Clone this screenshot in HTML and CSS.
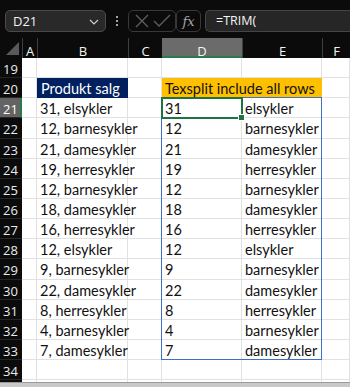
FILE: index.html
```html
<!DOCTYPE html>
<html lang="no">
<head>
<meta charset="utf-8">
<title>Excel</title>
<link rel="stylesheet" href="styles.css">
</head>
<body>
<div class="app">
  <div class="toolbar">
    <div class="namebox">
      <span class="nb-text">D21</span>
      <svg class="chev" width="10" height="6" viewBox="0 0 10 6"><path d="M1 1 L5 5 L9 1" fill="none" stroke="#d0d0d0" stroke-width="1.2"/></svg>
    </div>
    <div class="dots"><span></span><span></span><span></span></div>
    <div class="cmdbox">
      <svg width="16" height="14" viewBox="0 0 16 14"><path d="M2 1 L14 13 M14 1 L2 13" stroke="#5e5e5e" stroke-width="1.3" fill="none"/></svg>
      <svg width="18" height="14" viewBox="0 0 18 14"><path d="M1 7 L6 12 L17 1" stroke="#5e5e5e" stroke-width="1.3" fill="none"/></svg>
    </div>
    <div class="fxbox"><span class="fx">fx</span></div>
    <div class="formula">=TRIM(</div>
  </div>

  <div class="sheet">
    <div class="corner"><span class="tri"></span></div>
    <div class="ch">A</div><div class="ch">B</div><div class="ch">C</div><div class="ch ch-sel">D</div><div class="ch">E</div><div class="ch">F</div>

    <div class="rh">19</div><div class="c"></div><div class="c"></div><div class="c"></div><div class="c"></div><div class="c"></div><div class="c"></div>
    <div class="rh">20</div><div class="c"></div><div class="c navy">Produkt salg</div><div class="c"></div><div class="c gold span2">Texsplit include all rows</div><div class="c"></div>
    <div class="rh rh-sel">21</div><div class="c"></div><div class="c">31, elsykler</div><div class="c"></div><div class="c">31</div><div class="c">elsykler</div><div class="c"></div>
    <div class="rh">22</div><div class="c"></div><div class="c">12, barnesykler</div><div class="c"></div><div class="c">12</div><div class="c">barnesykler</div><div class="c"></div>
    <div class="rh">23</div><div class="c"></div><div class="c">21, damesykler</div><div class="c"></div><div class="c">21</div><div class="c">damesykler</div><div class="c"></div>
    <div class="rh">24</div><div class="c"></div><div class="c">19, herresykler</div><div class="c"></div><div class="c">19</div><div class="c">herresykler</div><div class="c"></div>
    <div class="rh">25</div><div class="c"></div><div class="c">12, barnesykler</div><div class="c"></div><div class="c">12</div><div class="c">barnesykler</div><div class="c"></div>
    <div class="rh">26</div><div class="c"></div><div class="c">18, damesykler</div><div class="c"></div><div class="c">18</div><div class="c">damesykler</div><div class="c"></div>
    <div class="rh">27</div><div class="c"></div><div class="c">16, herresykler</div><div class="c"></div><div class="c">16</div><div class="c">herresykler</div><div class="c"></div>
    <div class="rh">28</div><div class="c"></div><div class="c">12, elsykler</div><div class="c"></div><div class="c">12</div><div class="c">elsykler</div><div class="c"></div>
    <div class="rh">29</div><div class="c"></div><div class="c">9, barnesykler</div><div class="c"></div><div class="c">9</div><div class="c">barnesykler</div><div class="c"></div>
    <div class="rh">30</div><div class="c"></div><div class="c">22, damesykler</div><div class="c"></div><div class="c">22</div><div class="c">damesykler</div><div class="c"></div>
    <div class="rh">31</div><div class="c"></div><div class="c">8, herresykler</div><div class="c"></div><div class="c">8</div><div class="c">herresykler</div><div class="c"></div>
    <div class="rh">32</div><div class="c"></div><div class="c">4, barnesykler</div><div class="c"></div><div class="c">4</div><div class="c">barnesykler</div><div class="c"></div>
    <div class="rh">33</div><div class="c"></div><div class="c">7, damesykler</div><div class="c"></div><div class="c">7</div><div class="c">damesykler</div><div class="c"></div>
    <div class="rh">34</div><div class="c"></div><div class="c"></div><div class="c"></div><div class="c"></div><div class="c"></div><div class="c"></div>
    <div class="rh"></div><div class="c"></div><div class="c"></div><div class="c"></div><div class="c"></div><div class="c"></div><div class="c"></div>

    <div class="spill"></div>
    <div class="selection"><span class="handle"></span></div>
  </div>
  <div class="bottomband"></div>
</div>
</body>
</html>
```

FILE: styles.css
```css
* { box-sizing: border-box; }
html, body { margin: 0; padding: 0; }
body { background: #0b0b0b; width: 350px; height: 387px; overflow: hidden; }
.app { width: 350px; height: 387px; display: flex; flex-direction: column; }

.toolbar {
  height: 38px;
  flex: none;
  background: #0b0b0b;
  display: flex;
  align-items: flex-start;
  padding-top: 10px;
  font-family: "Open Sans", "Noto Sans", sans-serif;
}
.namebox {
  margin-left: 5px;
  width: 101px;
  height: 22px;
  background: #292929;
  border: 1px solid #4a4a4a;
  border-radius: 5px;
  display: flex;
  align-items: center;
  justify-content: space-between;
  padding: 0 6px 0 7px;
  color: #f2f2f2;
  font-size: 13px;
}
.chev { margin-top: 1px; }
.dots {
  width: 22px;
  height: 22px;
  display: flex;
  flex-direction: column;
  align-items: center;
  justify-content: center;
  gap: 2px;
}
.dots span { width: 2px; height: 2px; background: #d8d8d8; border-radius: 1px; }
.cmdbox {
  width: 48px;
  height: 22px;
  border: 1px solid #383838;
  border-radius: 5px;
  display: flex;
  align-items: center;
  justify-content: space-around;
  padding: 0 3px;
}
.fxbox {
  width: 25px;
  height: 22px;
  border: 1px solid #383838;
  border-radius: 5px;
  display: flex;
  align-items: center;
  justify-content: center;
}
.fx {
  font-family: "DejaVu Serif", "Liberation Serif", serif;
  font-style: italic;
  font-size: 13px;
  color: #a6a6a6;
  line-height: 1;
}
.formula {
  margin-left: 4px;
  flex: 1;
  height: 22px;
  background: #262626;
  border: 1px solid #454545;
  border-right: none;
  border-radius: 5px 0 0 5px;
  color: #f4f4f4;
  font-size: 12.5px;
  line-height: 20px;
  padding-left: 10px;
}

.sheet {
  position: relative;
  flex: none;
  height: 344px;
  overflow: hidden;
  display: grid;
  grid-template-columns: 22px 15px 91px 34px 80px 80px 28px;
  grid-template-rows: 20px repeat(17, 20.15px);
  background: #fff;
  font-family: Lato, "Liberation Sans", sans-serif;
}
.corner {
  background: #0b0b0b;
  position: relative;
}
.tri {
  position: absolute;
  right: 3px;
  bottom: 3px;
  width: 0;
  height: 0;
  border-left: 13px solid transparent;
  border-bottom: 13px solid #595959;
}
.ch {
  background: #0b0b0b;
  color: #f4f4f4;
  font-family: "Open Sans", "Noto Sans", sans-serif;
  font-size: 13px;
  text-align: center;
  line-height: 20px;
  border-left: 1px solid #3e3e3e;
  padding-top: 3px;
}
.ch-sel {
  background: #6b6b6b;
  border-bottom: 2px solid #2a7a4a;
  border-left: none;
}
.rh {
  background: #0b0b0b;
  color: #ececec;
  font-family: "Open Sans", "Noto Sans", sans-serif;
  font-size: 13px;
  line-height: 22px;
  padding-left: 3px;
  border-bottom: 1px solid #262626;
}
.rh-sel {
  background: #636363;
  border-right: 2px solid #2a7a4a;
  color: #ffffff;
}
.c {
  border-right: 1px solid #e1e1e1;
  border-bottom: 1px solid #e1e1e1;
  color: #111;
  font-size: 14.5px;
  line-height: 22px;
  padding-left: 3px;
  white-space: nowrap;
}
.navy {
  background: #002060;
  border-color: #002060;
  color: #fff;
  padding-left: 4px;
}
.gold {
  background: #ffc000;
  border-color: #ffc000;
}
.span2 { grid-column: span 2; }

.spill {
  position: absolute;
  grid-column: 5 / 7;
  grid-row: 4 / 17;
  top: -1px;
  left: -1px;
  right: 0;
  bottom: 0;
  border: 1px solid #3e70c8;
  pointer-events: none;
}
.selection {
  position: absolute;
  grid-column: 5 / 6;
  grid-row: 4 / 5;
  top: -1px;
  left: -1px;
  right: -1px;
  bottom: -1px;
  border: 2px solid #1f7244;
}
.handle {
  position: absolute;
  right: -4px;
  bottom: -4px;
  width: 7px;
  height: 7px;
  background: #1f7244;
  border: 1px solid #fff;
}
.bottomband { flex: 1; background: #c9c9c9; border-top: 1px solid #9a9a9a; }
```
